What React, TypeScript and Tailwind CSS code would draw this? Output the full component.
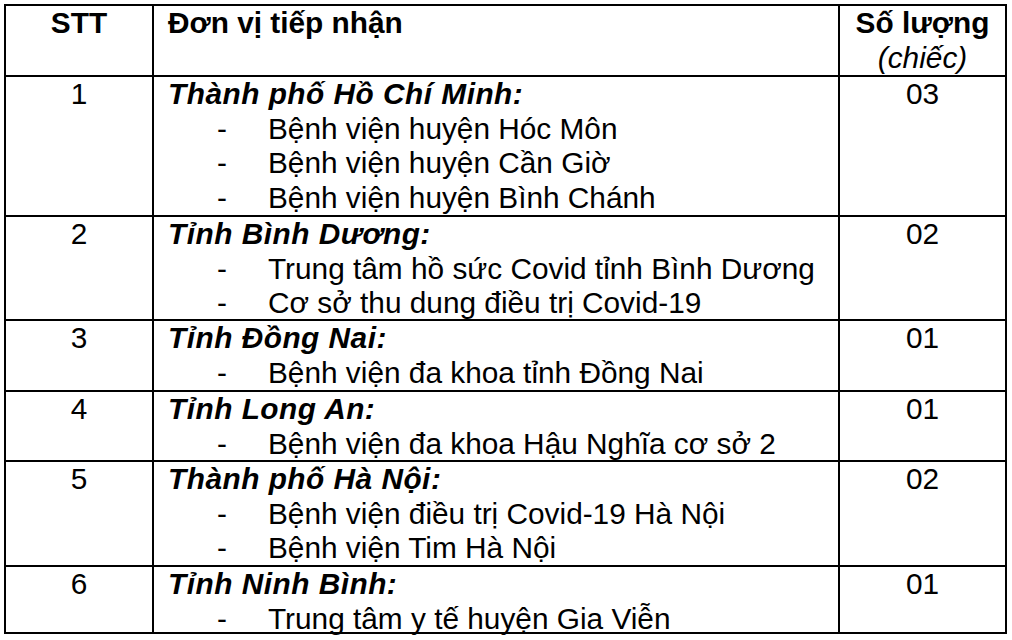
const rows = [
  {
    stt: '1',
    title: 'Thành phố Hồ Chí Minh:',
    items: ['Bệnh viện huyện Hóc Môn', 'Bệnh viện huyện Cần Giờ', 'Bệnh viện huyện Bình Chánh'],
    qty: '03',
    h: 'h-[140px]',
  },
  {
    stt: '2',
    title: 'Tỉnh Bình Dương:',
    items: ['Trung tâm hồ sức Covid tỉnh Bình Dương', 'Cơ sở thu dung điều trị Covid-19'],
    qty: '02',
    h: 'h-[104px]',
  },
  {
    stt: '3',
    title: 'Tỉnh Đồng Nai:',
    items: ['Bệnh viện đa khoa tỉnh Đồng Nai'],
    qty: '01',
    h: 'h-[71px]',
  },
  {
    stt: '4',
    title: 'Tỉnh Long An:',
    items: ['Bệnh viện đa khoa Hậu Nghĩa cơ sở 2'],
    qty: '01',
    h: 'h-[70px]',
  },
  {
    stt: '5',
    title: 'Thành phố Hà Nội:',
    items: ['Bệnh viện điều trị Covid-19 Hà Nội', 'Bệnh viện Tim Hà Nội'],
    qty: '02',
    h: 'h-[105px]',
  },
  {
    stt: '6',
    title: 'Tỉnh Ninh Bình:',
    items: ['Trung tâm y tế huyện Gia Viễn'],
    qty: '01',
    h: 'h-[67px]',
  },
]

export default function App() {
  return (
    <div
      className="w-[1012px] h-[640px] bg-white pt-[4px] pl-[4px] text-black text-[29.8px] leading-[34.5px]"
      style={{ fontFamily: '"Liberation Sans", Arial, sans-serif' }}
    >
      <div className="w-[1003px] border-2 border-black">
        {/* header */}
        <div className="flex h-[69px]">
          <div className="w-[146px] text-center font-bold">STT</div>
          <div className="w-[686px] border-l-2 border-black pl-[14px] font-bold">Đơn vị tiếp nhận</div>
          <div className="flex-1 border-l-2 border-black text-center">
            <div className="font-bold">Số lượng</div>
            <div className="italic">(chiếc)</div>
          </div>
        </div>
        {rows.map((r) => (
          <div key={r.stt} className={`flex border-t-2 border-black ${r.h}`}>
            <div className="w-[146px] text-center">{r.stt}</div>
            <div className="w-[686px] border-l-2 border-black pl-[14px]">
              <div className="font-bold italic tracking-[0.5px]">{r.title}</div>
              {r.items.map((it) => (
                <div key={it} className="flex whitespace-nowrap">
                  <span className="ml-[49px] w-[51px] shrink-0">-</span>
                  <span>{it}</span>
                </div>
              ))}
            </div>
            <div className="flex-1 border-l-2 border-black text-center">{r.qty}</div>
          </div>
        ))}
      </div>
    </div>
  )
}
